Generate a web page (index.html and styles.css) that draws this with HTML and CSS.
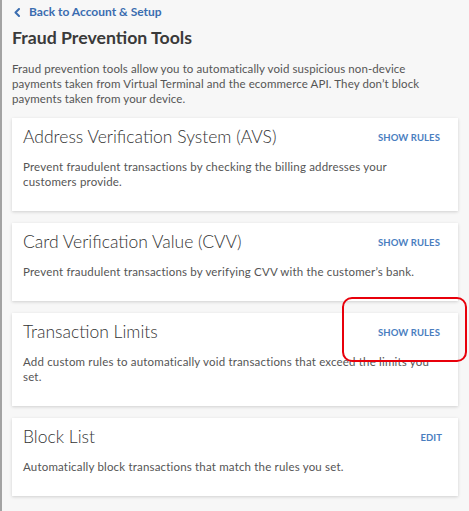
FILE: index.html
```html
<!DOCTYPE html>
<html lang="en">
<head>
<meta charset="utf-8">
<title>Fraud Prevention Tools</title>
<link rel="stylesheet" href="styles.css">
</head>
<body>
<div class="page">
  <a class="back" href="#"><svg class="chev" width="6" height="9" viewBox="0 0 6 9" aria-hidden="true"><path d="M5 1 L1.5 4.5 L5 8" fill="none" stroke="currentColor" stroke-width="2" stroke-linecap="round" stroke-linejoin="round"/></svg>Back to Account &amp; Setup</a>
  <h1 class="title">Fraud Prevention Tools</h1>
  <p class="intro">Fraud prevention tools allow you to automatically void suspicious non-device payments taken from Virtual Terminal and the ecommerce API. They don’t block payments taken from your device.</p>

  <div class="cards">
    <section class="card">
      <div class="card-head">
        <h2 class="card-title">Address Verification System (AVS)</h2>
        <a class="action" href="#">SHOW RULES</a>
      </div>
      <p class="card-desc">Prevent fraudulent transactions by checking the billing addresses your customers provide.</p>
    </section>

    <section class="card">
      <div class="card-head">
        <h2 class="card-title">Card Verification Value (CVV)</h2>
        <a class="action" href="#">SHOW RULES</a>
      </div>
      <p class="card-desc">Prevent fraudulent transactions by verifying CVV with the customer’s bank.</p>
    </section>

    <section class="card">
      <div class="card-head">
        <h2 class="card-title">Transaction Limits</h2>
        <a class="action" href="#">SHOW RULES</a>
      </div>
      <p class="card-desc">Add custom rules to automatically void transactions that exceed the limits you set.</p>
    </section>

    <section class="card">
      <div class="card-head">
        <h2 class="card-title">Block List</h2>
        <a class="action action-edit" href="#">EDIT</a>
      </div>
      <p class="card-desc">Automatically block transactions that match the rules you set.</p>
    </section>
  </div>

  <div class="highlight"></div>
</div>
</body>
</html>
```

FILE: styles.css
```css
html, body {
  margin: 0;
  padding: 0;
  background: #f7f7f7;
}

body {
  font-family: "Lato", "Liberation Sans", sans-serif;
  color: #444;
}

.page {
  position: relative;
  min-height: 511px;
  box-sizing: border-box;
  border-left: 2px solid #a3a3a3;
  padding: 4px 11px 12px 10px;
}

.back {
  display: flex;
  align-items: center;
  height: 16px;
  font-size: 12px;
  font-weight: 700;
  line-height: 16px;
  color: #3b6db0;
  text-decoration: none;
}

.chev {
  display: block;
  margin: 0 9px 0 2px;
}

.title {
  margin: 6px 0 0;
  font-size: 17.7px;
  line-height: 24px;
  font-weight: 700;
  color: #3a3a3a;
}

.intro {
  margin: 11px 0 0;
  font-size: 11.5px;
  letter-spacing: 0.1px;
  line-height: 15px;
  color: #555;
}

.cards {
  display: flex;
  flex-direction: column;
  gap: 12px;
  margin-top: 12px;
}

.card {
  background: #fff;
  box-shadow: 0 1px 3px rgba(0, 0, 0, 0.16);
  padding: 7px 18px 22px 11px;
}

.card-head {
  display: flex;
  align-items: center;
  justify-content: space-between;
}

.card-title {
  margin: 0;
  font-size: 17.5px;
  line-height: 24px;
  font-weight: 300;
  color: #333;
}

.action {
  font-size: 9.5px;
  font-weight: 700;
  letter-spacing: 0.1px;
  color: #4a7ebf;
  text-decoration: none;
}

.action-edit {
  margin-right: -2px;
}

.card-desc {
  margin: 10px 0 0;
  font-size: 11.5px;
  letter-spacing: 0.18px;
  line-height: 15px;
  color: #555;
}

.highlight {
  position: absolute;
  left: 340px;
  top: 297px;
  width: 121px;
  height: 61px;
  border: 2px solid #e8000b;
  border-radius: 10px;
}
```
